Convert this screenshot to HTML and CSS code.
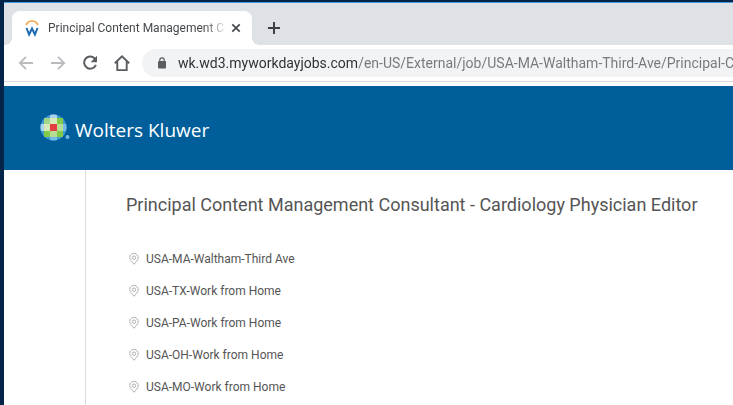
FILE: index.html
```html
<!DOCTYPE html>
<html lang="en">
<head>
<meta charset="utf-8">
<title>Principal Content Management Consultant</title>
<link rel="stylesheet" href="styles.css">
</head>
<body>
<div class="window">
  <div class="tabstrip">
    <div class="tab">
      <svg class="favicon" viewBox="0 0 14 18" aria-hidden="true">
        <path d="M1.200 6C2.200 3.200 4.400 2 7 2s4.800 1.200 5.800 4" fill="none" stroke="#f2a541" stroke-width="1.700"/>
        <path d="M1.500 9l2.600 6.500L7 9.500l2.900 6L12.500 9" fill="none" stroke="#1b69b3" stroke-width="2"/>
      </svg>
      <span class="tab-title">Principal Content Management C</span>
      <button class="icon-btn close" aria-label="Close tab"><svg viewBox="0 0 10 10"><path d="M1.300 1.300l7.400 7.400M8.700 1.300L1.300 8.700" stroke="#45484b" stroke-width="1.700"/></svg></button>
    </div>
    <button class="icon-btn new-tab" aria-label="New tab"><svg viewBox="0 0 12 12"><path d="M6 0v12M0 6h12" stroke="#3c4043" stroke-width="2"/></svg></button>
  </div>
  <div class="toolbar">
    <button class="icon-btn nav" aria-label="Back"><svg viewBox="0 0 16 16"><path d="M15 8H2.500M8 1.800L1.800 8 8 14.200" fill="none" stroke="#b9bbbe" stroke-width="1.800"/></svg></button>
    <button class="icon-btn nav" aria-label="Forward"><svg viewBox="0 0 16 16"><path d="M1 8h12.500M8 1.800L14.200 8 8 14.200" fill="none" stroke="#b9bbbe" stroke-width="1.800"/></svg></button>
    <button class="icon-btn nav" aria-label="Reload"><svg viewBox="0 0 16 16"><path d="M13.300 4.200A6.100 6.100 0 1 0 13.900 9.800" fill="none" stroke="#5a5d61" stroke-width="2"/><path d="M15 .8v6.400H8.600z" fill="#5a5d61"/></svg></button>
    <button class="icon-btn nav" aria-label="Home"><svg viewBox="0 0 16 16"><path d="M.8 8.300L8 1.400l7.200 6.900M3.300 6.500v8.600h9.400V6.500" fill="none" stroke="#5a5d61" stroke-width="1.900"/></svg></button>
    <div class="omnibox">
      <svg class="lock" viewBox="0 0 8 12" aria-hidden="true"><rect y="4" width="8" height="7.500" rx="1" fill="#5a5d61"/><path d="M1.800 4.500V3a2.200 2.200 0 0 1 4.400 0v1.500" fill="none" stroke="#5a5d61" stroke-width="1.200"/></svg>
      <input class="url" type="text" aria-label="Address" value="wk.wd3.myworkdayjobs.com/en-US/External/job/USA-MA-Waltham-Third-Ave/Principal-Content-Management-Consultant">
    </div>
  </div>
  <header class="site-header">
    <svg class="logo" viewBox="0 0 30 28" aria-hidden="true">
      <defs><clipPath id="globe"><circle cx="13.500" cy="13.500" r="13"/></clipPath></defs>
      <g clip-path="url(#globe)">
        <path d="M0 0h27v27H0z" fill="#409bd2"/>
        <path d="M4 4h19v19H4z" fill="#75bd43"/>
        <path d="M4 4h6v6H4zM17 4h6v6h-6zM4 17h6v6H4zM17 17h6v6h-6z" fill="#82ca48"/>
        <path d="M10 0h7v4h-7zM0 10h4v7H0z" fill="#a9d3ea"/>
        <path d="M10 4h7v6h-7zM4 10h6v7H4z" fill="#d4ebb9"/>
        <path d="M17 10h6v7h-6zM10 17h7v6h-7z" fill="#b5dd93"/>
        <path d="M4 4h6v6H4z" fill="#a4d58a"/>
        <path d="M23 10h4v7h-4zM10 23h7v4h-7z" fill="#74bce3"/>
        <path d="M10 10h7v7h-7z" fill="#e33e40"/>
      </g>
      <circle cx="27.500" cy="23" r="2" fill="#71b9e5"/>
    </svg>
    <span class="brand">Wolters Kluwer</span>
  </header>
  <main class="job">
    <h1>Principal Content Management Consultant - Cardiology Physician Editor</h1>
    <svg class="symbols" aria-hidden="true"><symbol id="pin" viewBox="0 0 10 12"><path d="M5 11.300C3.500 9.300.7 7 .7 4.700a4.300 4.300 0 0 1 8.600 0C9.300 7 6.500 9.300 5 11.300z" fill="none" stroke="#b0b0b0"/><circle cx="5" cy="4.700" r="1.700" fill="none" stroke="#b0b0b0"/></symbol></svg>
    <ul class="locations">
      <li><svg class="pin"><use href="#pin"/></svg>USA-MA-Waltham-Third Ave</li>
      <li><svg class="pin"><use href="#pin"/></svg>USA-TX-Work from Home</li>
      <li><svg class="pin"><use href="#pin"/></svg>USA-PA-Work from Home</li>
      <li><svg class="pin"><use href="#pin"/></svg>USA-OH-Work from Home</li>
      <li><svg class="pin"><use href="#pin"/></svg>USA-MO-Work from Home</li>
    </ul>
  </main>
</div>
</body>
</html>
```
FILE: styles.css
```css
* { box-sizing: border-box; }
body {
  margin: 0;
  min-height: 100vh;
  display: flex;
  background: #fff;
  overflow: hidden;
  font-family: Roboto, sans-serif;
}
svg { display: block; }
.window {
  flex: 1;
  min-width: 0;
  display: flex;
  flex-direction: column;
  border-left: 4px solid #04244a;
  border-top: 2px solid #04244a;
}
.icon-btn {
  display: block;
  flex: none;
  padding: 0;
  border: 0;
  background: none;
}
.tabstrip {
  display: flex;
  height: 43px;
  padding-top: 8px;
  background: #dee1e6;
  border-top: 1px solid #4a9be0;
}
.tab {
  position: relative;
  display: flex;
  align-items: center;
  width: 240px;
  margin-left: 8px;
  padding-left: 13px;
  background: #fff;
  border-radius: 8px 8px 0 0;
}
.tab::before,
.tab::after {
  content: "";
  position: absolute;
  bottom: 0;
  width: 8px;
  height: 8px;
}
.tab::before {
  right: 100%;
  background: radial-gradient(circle at 0 0, transparent 8px, #fff 8px);
}
.tab::after {
  left: 100%;
  background: radial-gradient(circle at 100% 0, transparent 8px, #fff 8px);
}
.favicon { width: 14px; height: 18px; }
.tab-title {
  width: 176px;
  margin-left: 9px;
  overflow: hidden;
  white-space: nowrap;
  font-size: 12px;
  line-height: 16px;
  color: #45484b;
  mask-image: linear-gradient(90deg, #000 156px, transparent 180px);
}
.close { margin-left: 7px; }
.close svg { width: 10px; height: 10px; }
.new-tab { margin-left: 16px; }
.new-tab svg { width: 12px; height: 12px; }
.toolbar {
  display: flex;
  align-items: center;
  gap: 16px;
  height: 41px;
  padding: 0 0 6px 14px;
  background: linear-gradient(#d9d9d9, #d9d9d9) 0 36px / 100% 1px no-repeat #fff;
}
.nav svg { width: 16px; height: 16px; }
.omnibox {
  flex: 1;
  min-width: 0;
  display: flex;
  align-items: center;
  height: 28px;
  margin-left: -4px;
  padding-left: 16px;
  background: #f1f3f4;
  border-radius: 14px 0 0 14px;
}
.lock { flex: none; width: 8px; height: 12px; }
.url {
  flex: 1;
  min-width: 0;
  margin-left: 12px;
  padding: 0;
  border: 0;
  outline: 0;
  font: 14px/20px Roboto, sans-serif;
  color: transparent;
  background: linear-gradient(90deg, #2b2d30 179px, #74777b 179px);
  background-clip: text;
}
.site-header {
  display: flex;
  align-items: center;
  gap: 5px;
  height: 84px;
  padding-left: 36px;
  background: #005f9b;
}
.logo { width: 30px; height: 28px; }
.brand {
  padding-top: 4px;
  font-family: "Open Sans", sans-serif;
  font-size: 19px;
  line-height: 24px;
  color: #fff;
}
.job {
  flex: 1;
  margin-left: 81px;
  padding: 23px 0 0 40px;
  border-left: 1px solid #dcdcdc;
  color: #555;
}
.job h1 {
  margin: 0;
  font-size: 18px;
  line-height: 24px;
  font-weight: 400;
  white-space: nowrap;
}
.symbols { width: 0; height: 0; }
.locations {
  margin: 26px 0 0;
  padding: 0;
  list-style: none;
}
.locations li {
  display: flex;
  align-items: center;
  gap: 7px;
  height: 32px;
  padding-left: 3px;
  font-size: 12px;
}
.pin { width: 10px; height: 12px; }
```
